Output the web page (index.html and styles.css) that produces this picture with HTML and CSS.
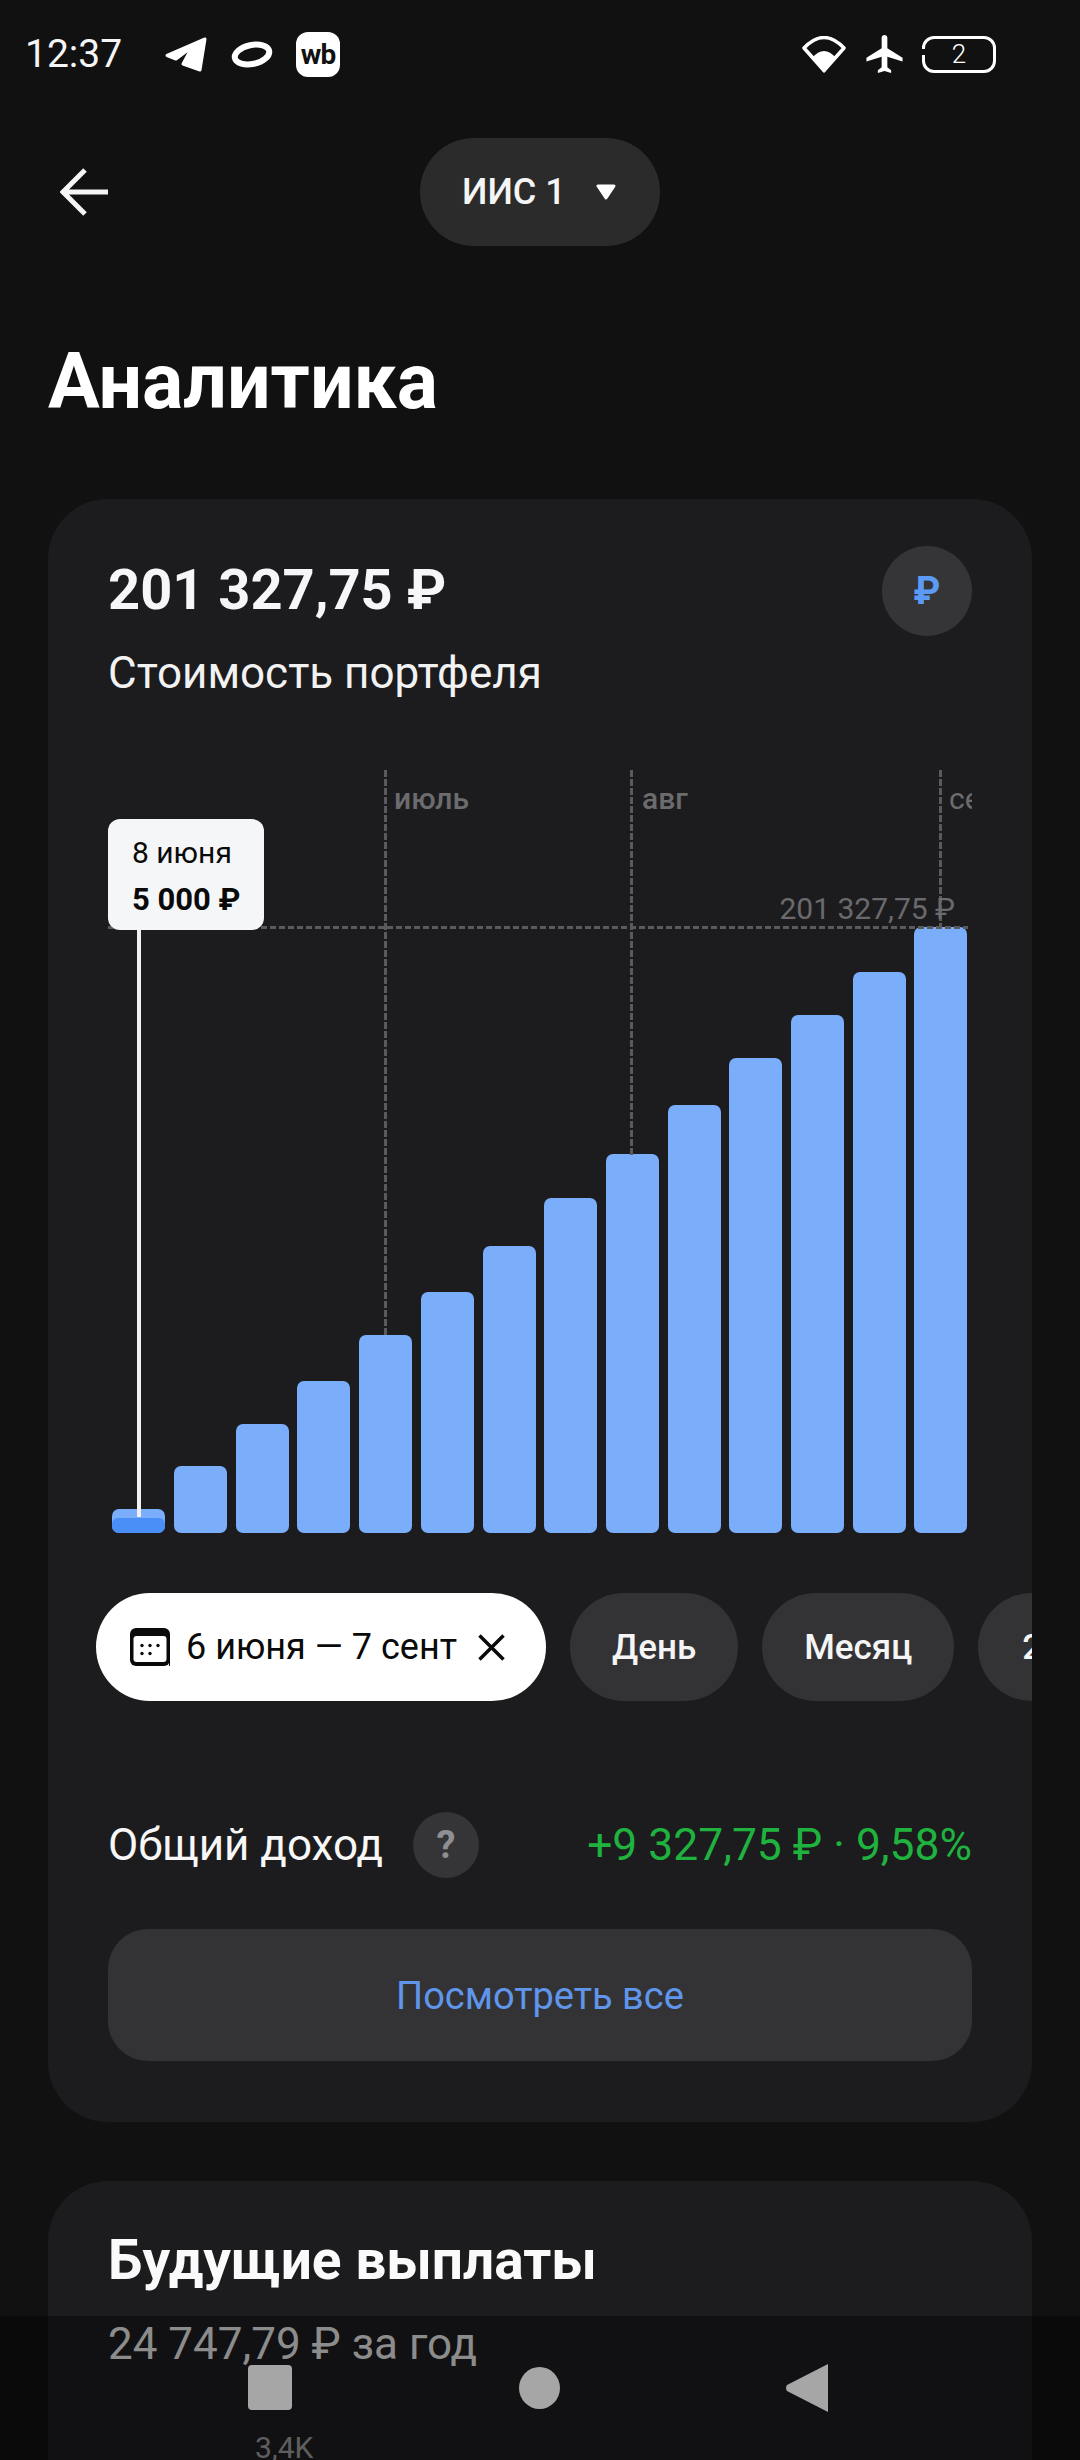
FILE: index.html
```html
<!DOCTYPE html>
<html lang="ru">
<head>
<meta charset="utf-8">
<title>Аналитика</title>
<link rel="stylesheet" href="styles.css">
</head>
<body>
<div class="page">
  <header class="status">
    <span class="time">12:37</span>
    <svg class="ic-tg" viewBox="165 38 42 35"><path d="M205 40 L167 56.500 L176 60 L192 48 L183 65 L200 71 Z" fill="#fff" stroke="#fff" stroke-width="3" stroke-linejoin="round"/></svg>
    <svg class="ic-ring" viewBox="0 0 42 29"><ellipse cx="21" cy="14.500" rx="17.500" ry="9.500" transform="rotate(-12 21 14.500)" fill="none" stroke="#fff" stroke-width="6"/></svg>
    <span class="wb">wb</span>
    <span class="status-right">
      <svg class="ic-wifi" viewBox="802 35 44 37"><path d="M804 47 Q824 26 844 47 L824 69.500 Z" fill="none" stroke="#fff" stroke-width="3.500" stroke-linejoin="round"/><path d="M812 57 Q824 43 836 57 L824 72 Z" fill="#fff"/></svg>
      <svg class="ic-plane" viewBox="2 2 19 20"><path d="M21 16v-2l-8-5V3.500c0-.83-.67-1.500-1.500-1.500S10 2.670 10 3.500V9l-8 5v2l8-2.500V19l-2 1.500V22l3.500-1 3.500 1v-1.500L13 19v-5.500l8 2.500z" fill="#fff"/></svg>
      <span class="battery">2</span>
    </span>
  </header>

  <nav class="topbar">
    <svg class="ic-back" viewBox="0 0 48 48"><path d="M48 24 H3 M25 2 L3 24 L25 46" fill="none" stroke="#f5f5f5" stroke-width="5"/></svg>
    <div class="account">
      <span>ИИС 1</span>
      <svg class="ic-drop" viewBox="0 0 20 16"><path d="M2 2 H18 L10 14 Z" fill="#fff" stroke="#fff" stroke-width="3" stroke-linejoin="round"/></svg>
    </div>
  </nav>

  <h1 class="title">Аналитика</h1>

  <section class="card">
    <div class="card-head">
      <div>
        <div class="amount">201 327,75 ₽</div>
        <div class="amount-sub">Стоимость портфеля</div>
      </div>
      <div class="currency">₽</div>
    </div>

    <div class="chart">
      <div class="bars">
        <div class="bar bar-active" style="height:24px"></div>
        <div class="bar" style="height:67px"></div>
        <div class="bar" style="height:109px"></div>
        <div class="bar" style="height:152px"></div>
        <div class="bar" style="height:198px"></div>
        <div class="bar" style="height:241px"></div>
        <div class="bar" style="height:287px"></div>
        <div class="bar" style="height:335px"></div>
        <div class="bar" style="height:379px"></div>
        <div class="bar" style="height:428px"></div>
        <div class="bar" style="height:475px"></div>
        <div class="bar" style="height:518px"></div>
        <div class="bar" style="height:561px"></div>
        <div class="bar" style="height:606px"></div>
      </div>
      <i class="vline vline-jul"></i>
      <i class="vline vline-aug"></i>
      <i class="vline vline-sep"></i>
      <i class="hline"></i>
      <span class="month month-jul">июль</span>
      <span class="month month-aug">авг</span>
      <span class="month month-sep">сент</span>
      <span class="max-label">201 327,75 ₽</span>
      <i class="cursor"></i>
      <div class="tip">
        <div class="tip-date">8 июня</div>
        <div class="tip-value">5 000 ₽</div>
      </div>
    </div>

    <div class="chips">
      <div class="chip chip-date">
        <svg class="ic-cal" viewBox="0 0 40 38"><rect width="40" height="38" rx="6" fill="#0a0a0a"/><rect x="39" y="31" width="1" height="7" fill="#0a0a0a"/><rect x="3.500" y="8" width="33" height="26" rx="3" fill="#fff"/><g fill="#0a0a0a"><circle cx="12" cy="17.500" r="1.700"/><circle cx="20" cy="17.500" r="1.700"/><circle cx="28" cy="17.500" r="1.700"/><circle cx="12" cy="25.500" r="1.700"/><circle cx="20" cy="25.500" r="1.700"/></g></svg>
        <span class="chip-date-text">6 июня — 7 сент</span>
        <svg class="ic-x" viewBox="0 0 27 27"><path d="M1.500 1.500 L25.500 25.500 M25.500 1.500 L1.500 25.500" stroke="#0a0a0a" stroke-width="3.500" fill="none"/></svg>
      </div>
      <div class="chip">День</div>
      <div class="chip">Месяц</div>
      <div class="chip chip-cut">2</div>
    </div>

    <div class="income">
      <span class="income-label">Общий доход</span>
      <span class="help">?</span>
      <span class="income-value">+9 327,75 ₽ · 9,58%</span>
    </div>

    <div class="see-all">Посмотреть все</div>
  </section>

  <section class="card card-next">
    <h2 class="next-title">Будущие выплаты</h2>
    <div class="next-sub">24 747,79 ₽ за год</div>
    <div class="next-count">3,4K</div>
  </section>

  <footer class="navbar">
    <i class="nav-square"></i>
    <i class="nav-circle"></i>
    <svg class="nav-back" viewBox="0 0 43 48"><path d="M43 0 V48 L2 27 Q0 24 2 21 Z" fill="#a6a6a6"/></svg>
  </footer>
</div>
</body>
</html>
```

FILE: styles.css
```css
* { box-sizing: border-box; }
html, body { margin: 0; padding: 0; background: #111112; }
body { font-family: Roboto, "Noto Sans", sans-serif; color: #fff; }
i { display: block; }

.page { position: relative; width: 1080px; height: 2460px; overflow: hidden; background: #111112; }

/* status bar */
.status { display: flex; align-items: center; height: 108px; padding: 0 84px 0 25px; }
.time { width: 96px; font-size: 39px; line-height: 44px; color: #f5f5f5; white-space: nowrap; }
.ic-tg { width: 42px; height: 35px; margin-left: 44px; }
.ic-ring { width: 42px; height: 29px; margin-left: 24px; }
.wb { display: flex; align-items: center; justify-content: center; width: 44px; height: 45px; margin-left: 23px; background: #fff; border-radius: 12px; color: #111; font-size: 28px; font-weight: 700; letter-spacing: -1px; }
.status-right { display: flex; align-items: center; margin-left: auto; }
.ic-wifi { width: 44px; height: 37px; }
.ic-plane { width: 37px; height: 38px; margin-left: 20px; }
.battery { position: relative; display: flex; align-items: center; justify-content: center; width: 74px; height: 37px; margin-left: 19px; border: 3px solid #fff; border-radius: 12px; font-size: 26px; font-weight: 300; }
.battery::before { content: ""; position: absolute; left: -4px; top: 10px; width: 5px; height: 6px; background: #111112; }

/* top bar */
.topbar { display: grid; grid-template-columns: 1fr auto 1fr; align-items: center; margin-top: 30px; padding-left: 60px; padding-right: 60px; }
.ic-back { width: 48px; height: 48px; }
.account { display: flex; align-items: center; justify-content: space-between; width: 240px; height: 108px; padding: 0 44px 0 42px; background: #2b2b2c; border-radius: 54px; font-size: 36px; font-weight: 500; color: #f5f5f5; }
.ic-drop { width: 20px; height: 16px; }

.title { margin: 94px 0 0 48px; font-size: 77px; line-height: 84px; font-weight: 700; color: #fff; }

/* cards */
.card { margin: 75px 48px 0; padding: 47px 60px 61px; background: #1c1c1e; border-radius: 60px; overflow: hidden; }
.card-head { display: flex; justify-content: space-between; align-items: flex-start; }
.amount { margin-top: 14px; font-size: 56px; line-height: 60px; font-weight: 700; color: #f6f6f8; }
.amount-sub { margin-top: 28px; font-size: 44px; line-height: 50px; color: #f2f2f2; }
.currency { display: flex; align-items: center; justify-content: center; width: 90px; height: 90px; border-radius: 50%; background: #353537; color: #5b9bf5; font-size: 38px; font-weight: 700; }

/* chart */
.chart { position: relative; height: 763px; margin-top: 72px; overflow: hidden; }
.bars { display: flex; align-items: flex-end; gap: 8.7px; height: 100%; padding-left: 4.4px; }
.bar { position: relative; flex: 0 0 53px; background: #7aaefb; border-radius: 7px; }
.bar-active { overflow: hidden; }
.bar-active::after { content: ""; position: absolute; left: 0; right: 0; bottom: 0; height: 15px; background: #4a8ff7; border-radius: 6px 6px 0 0; }
.vline { position: absolute; top: 0; width: 3px; margin-left: -2px; background: repeating-linear-gradient(to bottom, #5a5a5c 0 7px, transparent 7px 9px); }
.vline-jul { left: 278px; height: 566px; }
.vline-aug { left: 524px; height: 385px; }
.vline-sep { left: 833px; height: 157px; }
.hline { position: absolute; left: 0; right: 4px; top: 156px; height: 3px; background: repeating-linear-gradient(to right, #5a5a5c 0 6px, transparent 6px 9px); }
.month { position: absolute; top: 11px; font-size: 30px; line-height: 36px; color: #6c6c6e; }
.month-jul { left: 286px; font-weight: 500; }
.month-aug { left: 534px; font-weight: 500; }
.month-sep { left: 841px; }
.max-label { position: absolute; right: 17px; top: 121px; font-size: 30px; line-height: 36px; color: #6a6a6c; }
.cursor { position: absolute; left: 29px; top: 160px; width: 4px; height: 587px; background: #f1f1f3; }
.tip { position: absolute; left: 0; top: 49px; width: 156px; height: 111px; padding: 16px 0 0 24px; background: #f5f6f8; border-radius: 12px; color: #0a0a0a; }
.tip-date { font-size: 30px; line-height: 36px; }
.tip-value { margin-top: 11px; font-size: 31px; line-height: 36px; font-weight: 700; }

/* chips */
.chips { display: flex; gap: 24px; margin: 60px -60px 0 -12px; overflow: hidden; }
.chip { display: flex; flex: 0 0 auto; align-items: center; height: 108px; padding: 0 42px; border-radius: 54px; background: #333335; font-size: 35px; font-weight: 500; color: #f5f5f5; }
.chip-date { width: 450px; padding: 0 0 0 34px; background: #fff; color: #0a0a0a; font-size: 36px; font-weight: 400; }
.ic-cal { flex: none; width: 40px; height: 38px; }
.chip-date-text { margin-left: 16px; white-space: nowrap; }
.ic-x { flex: none; width: 27px; height: 27px; margin-left: auto; margin-right: 41px; }
.chip-cut { width: 120px; padding-left: 44px; }

/* income */
.income { display: flex; align-items: center; height: 66px; margin-top: 111px; }
.income-label { font-size: 44px; color: #f7f7f7; }
.help { display: flex; align-items: center; justify-content: center; width: 66px; height: 66px; margin-left: 30px; border-radius: 50%; background: #353537; color: #8e8e93; font-size: 38px; font-weight: 700; }
.income-value { margin-left: auto; font-size: 44.4px; color: #1fb23e; }

.see-all { display: flex; align-items: center; justify-content: center; height: 132px; margin-top: 51px; padding-top: 2px; border-radius: 40px; background: #333335; color: #5f96eb; font-size: 38px; }

/* next card */
.card-next { margin-top: 59px; padding-top: 50px; padding-bottom: 0; height: 400px; }
.next-title { margin: 0; font-size: 55px; line-height: 58px; font-weight: 700; color: #fafafa; }
.next-sub { margin-top: 30px; font-size: 44px; line-height: 50px; color: #dcdcdc; }
.next-count { margin: 61px 0 0 147px; font-size: 30px; line-height: 36px; color: #949494; }

/* system navigation */
.navbar { position: absolute; left: 0; right: 0; bottom: 0; display: flex; align-items: flex-start; gap: 226px; height: 144px; padding: 48px 0 0 248px; background: rgba(0, 0, 0, 0.36); }
.nav-square { width: 44px; height: 45px; background: #a6a6a6; border-radius: 4px; margin-top: 1px; }
.nav-circle { width: 41px; height: 42px; background: #a6a6a6; border-radius: 50%; margin: 3px -1px 0 1px; }
.nav-back { width: 43px; height: 48px; }
```
